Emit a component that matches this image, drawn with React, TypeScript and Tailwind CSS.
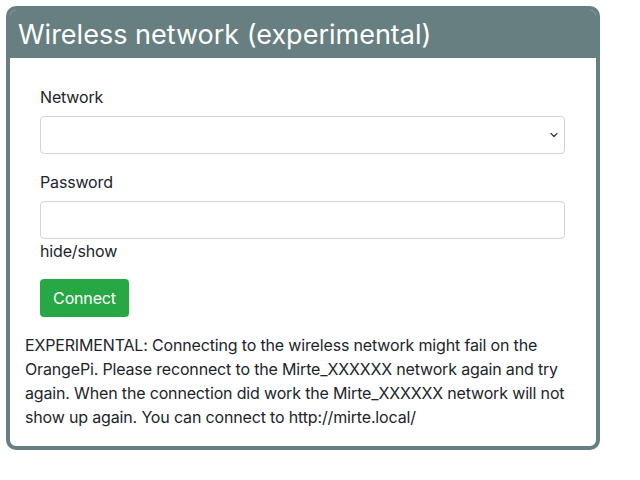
import React from 'react';

const App: React.FC = () => {
  return (
    <div className="w-[640px] h-[480px] bg-white pt-[6px] pl-[6px] font-['Inter','Noto_Sans',sans-serif] text-[#212529]">
      <div className="w-[594px] rounded-[10px] border-4 border-[#677f80] bg-white overflow-hidden">
        <div className="h-[48px] bg-[#677f80] pl-[8px] flex items-center">
          <h1 className="text-[27px] leading-none text-white font-normal">Wireless network (experimental)</h1>
        </div>
        <div className="px-[15px] pt-[27px] pb-[17px] tracking-[-0.01em]">
          <form className="px-[15px]">
            <div className="mb-4">
              <label className="block text-base leading-6 mb-[7px]">Network</label>
              <div className="relative">
                <select className="block w-[525px] h-[38px] rounded border border-[#ced4da] bg-white appearance-none px-3" />
                <svg className="absolute left-[509px] top-[15px] w-[10px] h-[8px]" viewBox="0 0 16 16" fill="none" stroke="#343a40" strokeWidth="2.5" strokeLinecap="round" strokeLinejoin="round">
                  <path d="M2 5l6 6 6-6" />
                </svg>
              </div>
            </div>
            <div className="mb-4">
              <label className="block text-base leading-6 mb-[7px]">Password</label>
              <input type="password" className="block w-[525px] h-[38px] rounded border border-[#ced4da] bg-white px-3" />
              <div className="text-base leading-6">hide/show</div>
            </div>
            <button type="button" className="h-[38px] w-[89px] rounded bg-[#28a745] text-white text-base leading-6">Connect</button>
          </form>
          <p className="mt-4 text-base leading-6">
            EXPERIMENTAL: Connecting to the wireless network might fail on the OrangePi. Please reconnect to the Mirte_XXXXXX network again and try again. When the connection did work the Mirte_XXXXXX network will not show up again. You can connect to http://mirte.local/
          </p>
        </div>
      </div>
    </div>
  );
};

export default App;
